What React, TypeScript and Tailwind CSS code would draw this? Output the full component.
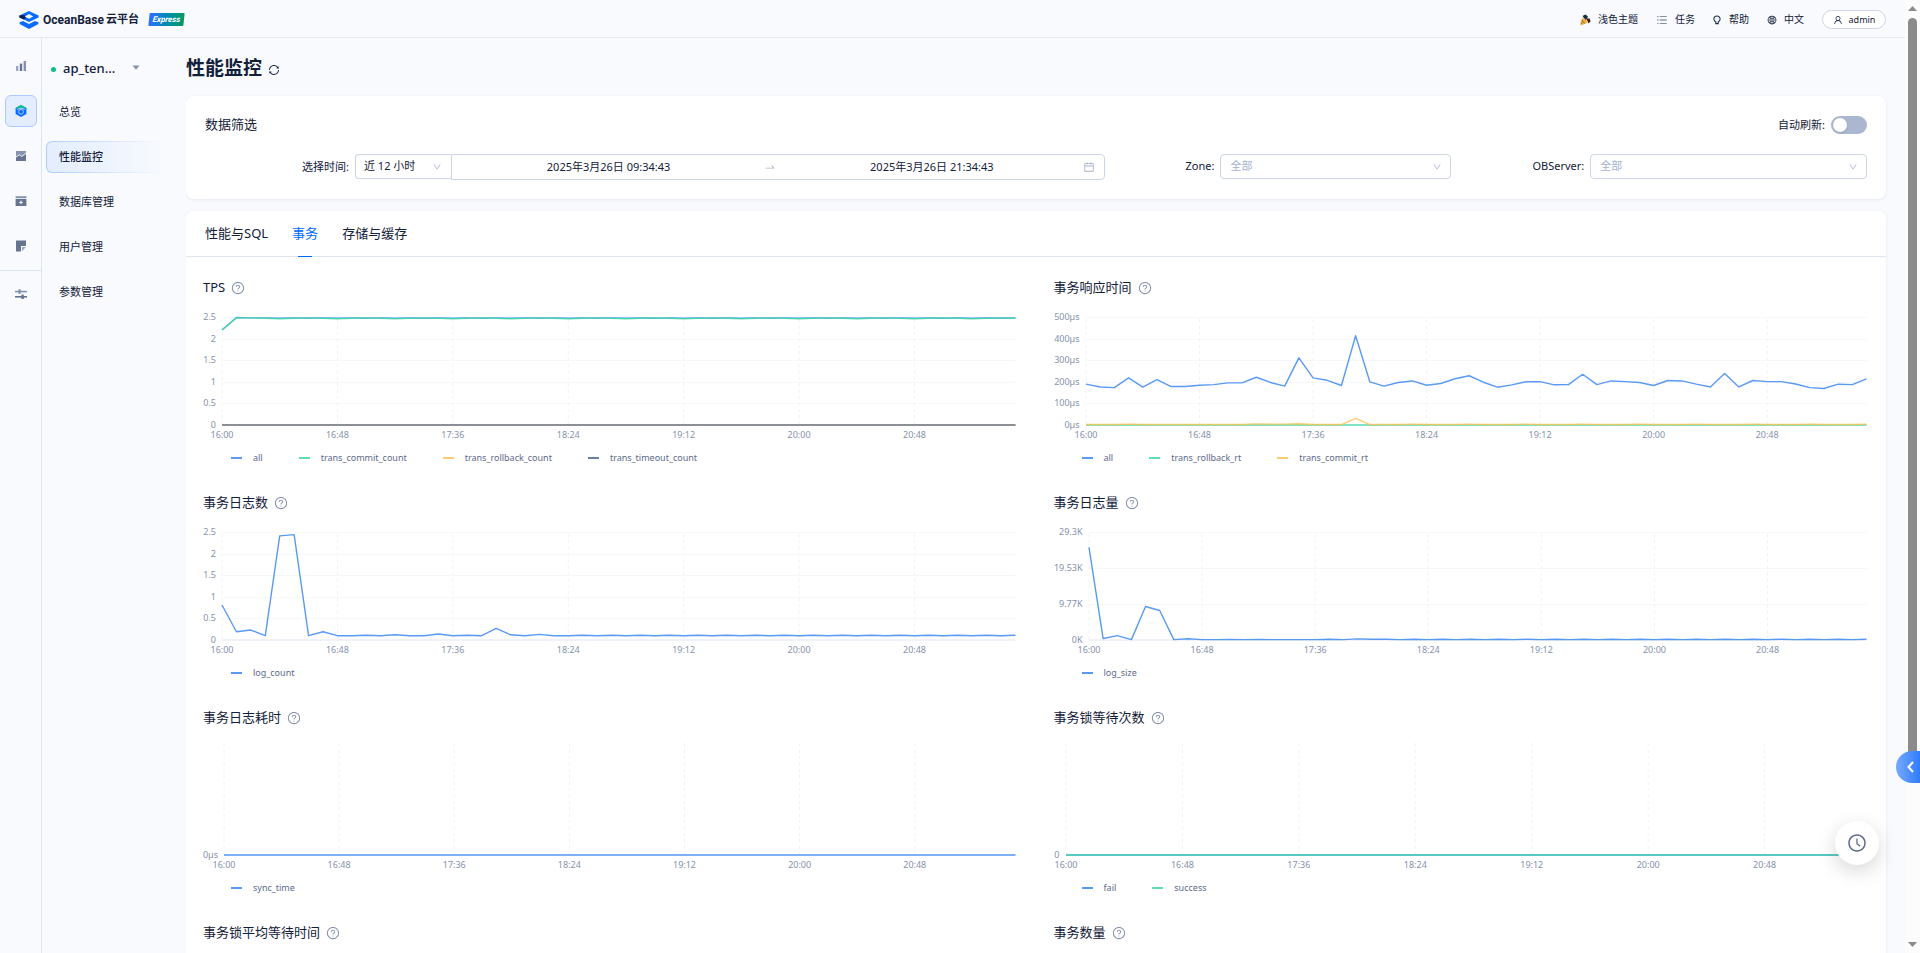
import type { ReactNode } from "react";
import {
  AiOutlineCalendar,
  AiOutlineClockCircle,
  AiOutlineDown,
  AiOutlineGlobal,
  AiOutlineQuestionCircle,
  AiOutlineSwapRight,
  AiOutlineSync,
  AiOutlineUnorderedList,
  AiOutlineUser,
} from "react-icons/ai";

type Series = {
  name: string;
  color: string;
  data: number[];
};

type ChartConfig = {
  title: string;
  axisWidth: string;
  ticks: string[];
  max: number;
  series: Series[];
};

const BLUE = "#3d88f2";
const GREEN = "#41d9a6";
const YELLOW = "#fac357";
const NAVY = "#4f6999";

const POINTS = 56;
const PLOT_HEIGHT = 108;
const TIMES = ["16:00", "16:48", "17:36", "18:24", "19:12", "20:00", "20:48"];

const fill = (head: number[], tail: number[]) =>
  Array.from({ length: POINTS }, (_, i) =>
    i < head.length ? head[i] : tail[i % tail.length],
  );

const zeros = fill([], [0]);

const charts: ChartConfig[] = [
  {
    title: "TPS",
    axisWidth: "w-[19px]",
    ticks: ["2.5", "2", "1.5", "1", "0.5", "0"],
    max: 2.5,
    series: [
      { name: "all", color: BLUE, data: fill([2.2, 2.49, 2.48], [2.47, 2.48]) },
      {
        name: "trans_commit_count",
        color: GREEN,
        data: fill([2.2, 2.48, 2.48], [2.46, 2.47, 2.48, 2.47]),
      },
      { name: "trans_rollback_count", color: YELLOW, data: zeros },
      { name: "trans_timeout_count", color: NAVY, data: zeros },
    ],
  },
  {
    title: "事务响应时间",
    axisWidth: "w-8",
    ticks: ["500µs", "400µs", "300µs", "200µs", "100µs", "0µs"],
    max: 500,
    series: [
      {
        name: "all",
        color: BLUE,
        data: [
          189, 176, 173, 218, 175, 210, 178, 178, 184, 187, 195, 195, 221, 197,
          180, 311, 218, 207, 183, 413, 200, 180, 197, 204, 184, 192, 214, 228,
          198, 175, 186, 200, 201, 186, 187, 235, 187, 204, 201, 197, 183, 206,
          204, 189, 176, 238, 176, 206, 201, 201, 190, 173, 169, 189, 187, 214,
        ],
      },
      { name: "trans_rollback_rt", color: GREEN, data: zeros },
      {
        name: "trans_commit_rt",
        color: YELLOW,
        data: fill(
          [2, 2, 2, 4, 2, 2, 2, 2, 2, 2, 2, 2, 5, 4, 4, 6, 2, 2, 2, 31, 2],
          [2, 2, 2, 4],
        ),
      },
    ],
  },
  {
    title: "事务日志数",
    axisWidth: "w-[19px]",
    ticks: ["2.5", "2", "1.5", "1", "0.5", "0"],
    max: 2.5,
    series: [
      {
        name: "log_count",
        color: BLUE,
        data: fill(
          [
            0.81, 0.19, 0.23, 0.1, 2.41, 2.44, 0.1, 0.19, 0.1, 0.1, 0.11, 0.1,
            0.12, 0.1, 0.1, 0.14, 0.1, 0.11, 0.1, 0.27, 0.12, 0.1, 0.13, 0.1,
          ],
          [0.1, 0.11],
        ),
      },
    ],
  },
  {
    title: "事务日志量",
    axisWidth: "w-[35px]",
    ticks: ["29.3K", "19.53K", "9.77K", "0K"],
    max: 29.3,
    series: [
      {
        name: "log_size",
        color: BLUE,
        data: fill(
          [
            25.1, 0.4, 1.2, 0.1, 9.1, 8, 0.1, 0.35, 0.1, 0.1, 0.15, 0.1, 0.15,
            0.1, 0.1, 0.1, 0.1, 0.2, 0.1, 0.3, 0.2,
          ],
          [0.1, 0.2],
        ),
      },
    ],
  },
  {
    title: "事务日志耗时",
    axisWidth: "w-[21px]",
    ticks: ["0µs"],
    max: 1,
    series: [{ name: "sync_time", color: BLUE, data: zeros }],
  },
  {
    title: "事务锁等待次数",
    axisWidth: "w-3",
    ticks: ["0"],
    max: 1,
    series: [
      { name: "fail", color: BLUE, data: zeros },
      { name: "success", color: GREEN, data: zeros },
    ],
  },
  {
    title: "事务锁平均等待时间",
    axisWidth: "w-[21px]",
    ticks: [],
    max: 1,
    series: [],
  },
  {
    title: "事务数量",
    axisWidth: "w-3",
    ticks: [],
    max: 1,
    series: [],
  },
];

function Plot({ ticks, max, series }: ChartConfig) {
  const single = ticks.length === 1;
  return (
    <svg className="mt-[7px] h-[130px] min-w-0 flex-1 overflow-visible">
      {!single &&
        ticks.map((tick, i) => {
          const y = Math.round((i * PLOT_HEIGHT) / (ticks.length - 1)) + 0.5;
          return (
            <line key={tick} x1="0" x2="100%" y1={y} y2={y} stroke="#f5f7fb" />
          );
        })}
      <line
        x1="0"
        x2="100%"
        y1={PLOT_HEIGHT}
        y2={PLOT_HEIGHT}
        stroke="#f0f2f8"
        strokeWidth="2"
      />
      {TIMES.map((time, i) => {
        const x = `${(i * 800) / (POINTS - 1)}%`;
        return (
          <g key={time}>
            <line
              x1={x}
              x2={x}
              y1={single ? -4 : 2}
              y2={PLOT_HEIGHT + 3}
              stroke="#f1f2f6"
              strokeDasharray="3.2 3.2"
            />
            <text x={x} y="121" textAnchor="middle" fontSize="9" fill="#8592ad">
              {time}
            </text>
          </g>
        );
      })}
      <svg
        width="100%"
        height={PLOT_HEIGHT}
        viewBox={`0 0 ${POINTS - 1} ${PLOT_HEIGHT}`}
        preserveAspectRatio="none"
        overflow="visible"
      >
        {series.map((s) => (
          <polyline
            key={s.name}
            points={s.data
              .map((v, i) => `${i},${PLOT_HEIGHT - (v / max) * PLOT_HEIGHT}`)
              .join(" ")}
            fill="none"
            stroke={s.color}
            strokeWidth="1.4"
            strokeOpacity="0.85"
            strokeLinejoin="round"
            vectorEffect="non-scaling-stroke"
          />
        ))}
      </svg>
    </svg>
  );
}

function Chart(props: ChartConfig) {
  const { title, axisWidth, ticks, series } = props;
  return (
    <section>
      <h3 className="flex h-5 items-center gap-1.5 text-[13px]">
        {title}
        <AiOutlineQuestionCircle className="size-3.5 text-[#8592ad]" />
      </h3>
      {series.length > 0 && (
        <>
          <div className="mt-3 flex h-[137px]">
            <div
              className={`flex h-[122px] flex-col items-end pr-1.5 text-[9px] leading-[14px] whitespace-nowrap text-[#8592ad] ${
                ticks.length > 1 ? "justify-between" : "justify-end"
              } ${axisWidth}`}
            >
              {ticks.map((tick) => (
                <span key={tick}>{tick}</span>
              ))}
            </div>
            <Plot {...props} />
          </div>
          <ul className="flex h-[22px] items-center gap-9 pl-7 text-[9px] text-[#5c6b8a]">
            {series.map((s) => (
              <li key={s.name} className="flex items-center gap-[11px]">
                <svg className="h-0.5 w-[11px]">
                  <rect width="11" height="2" fill={s.color} opacity="0.85" />
                </svg>
                {s.name}
              </li>
            ))}
          </ul>
        </>
      )}
    </section>
  );
}

function Logo() {
  return (
    <svg viewBox="0 0 20 18" className="h-[18px] w-5">
      <path d="M10 0l9.6 4.6v1.8L10 11 .4 6.4V4.6z" fill="#0a6cff" />
      <path d="M.4 4.6L5.4 4l1.4 2.6-2 1.8L.4 6.4z" fill="#0b1f4a" />
      <path d="M10 3l4.2 2.4L10 7.8 5.8 5.4z" fill="#f8fafe" />
      <path
        d="M.6 11.2l3.4-1.1 6 2.9 6-2.9 3.4 1.1v1.7L10 18 .6 12.9z"
        fill="#0a6cff"
      />
    </svg>
  );
}

function Header() {
  return (
    <header className="flex h-[38px] shrink-0 items-center border-b border-[#e2e8f3] px-[19px] pt-0.5">
      <Logo />
      <div className="ml-1 flex items-center gap-0.5 font-bold">
        <span className="font-['Roboto','Noto_Sans_CJK_SC',sans-serif] text-xs">
          OceanBase
        </span>
        <span className="text-[11px]">云平台</span>
      </div>
      <span className="ml-2.5 flex h-[13px] w-[35px] -skew-x-6 items-center justify-center rounded-[1px] bg-linear-to-r from-[#2f6bff] to-[#0b9a5c] font-['Roboto',sans-serif] text-[8px] font-bold text-white italic">
        Express
      </span>
      <nav className="ml-auto flex items-center gap-[18px] text-[10px]">
        <button className="flex items-center gap-[7px]">
          <svg viewBox="0 0 12 12" className="size-3">
            <path d="M3.4 3.2l5.6 5.4L1 11.4z" fill="#f5b83d" />
            <path d="M2.6 6l3.2 3.6M1.9 8.4l1.8 2" stroke="#8a5a1a" />
            <path d="M3.6 2L6.4.4l2.4 1.8-.4 2.6-2.4.8z" fill="#12313c" />
            <path d="M7.4 5l3-.8 1.2 3-1.9 2.4z" fill="#3a1c1c" />
            <circle cx="6.8" cy="5.8" r="1" fill="#e8642f" />
          </svg>
          浅色主题
        </button>
        <button className="flex items-center gap-[7px]">
          <AiOutlineUnorderedList className="size-3 text-[#5c6b8a]" />
          任务
        </button>
        <button className="flex items-center gap-2">
          <svg viewBox="0 0 8 10" className="h-2.5 w-2" fill="none">
            <path
              d="M2.8 7C1.6 6.4.9 5.4.9 4.1a3.1 3.1 0 016.2 0c0 1.3-.7 2.3-1.9 2.9v1.6H2.8z"
              stroke="#1f2d4d"
              strokeWidth="1.1"
            />
          </svg>
          帮助
        </button>
        <button className="flex items-center gap-[7px]">
          <AiOutlineGlobal className="size-2.5" />
          中文
        </button>
        <button className="flex h-[19px] w-16 items-center justify-center gap-1.5 rounded-full border border-[#cdd5e6] bg-white text-[9px]">
          <AiOutlineUser className="size-2.5" />
          admin
        </button>
      </nav>
    </header>
  );
}

function RailItem({
  label,
  active,
  children,
}: {
  label: string;
  active?: boolean;
  children: ReactNode;
}) {
  return (
    <a
      href="#"
      aria-label={label}
      className={`flex size-8 items-center justify-center rounded-md border ${
        active ? "border-[#aecbff] bg-[#e3edfe]" : "border-transparent"
      }`}
    >
      <svg viewBox="0 0 12 12" className="size-3">
        {children}
      </svg>
    </a>
  );
}

function Rail() {
  return (
    <nav className="flex w-[42px] shrink-0 flex-col border-r border-[#dbe4f2] pt-3">
      <div className="flex flex-col items-center gap-[13px]">
        <RailItem label="监控">
          <path d="M1 6h2.4v5H1z" fill="#9aa6bf" />
          <path d="M4.8 3.6h2.4V11H4.8z" fill="#66748f" />
          <path d="M8.6 1H11v10H8.6z" fill="#8793ad" />
        </RailItem>
        <RailItem label="租户" active>
          <path d="M6 0l5.4 3v6L6 12 .6 9V3z" fill="#0a6cff" />
          <path d="M6 0l5.4 3v1L6 2.6.6 4V3z" fill="#0ac185" />
          <path
            d="M2.2 4.4L6 3.2l3.8 1.2"
            stroke="#e3edfe"
            fill="none"
            strokeWidth=".8"
          />
          <circle
            cx="6"
            cy="6.8"
            r="2.4"
            fill="#0a6cff"
            stroke="#cfe0ff"
            strokeWidth=".8"
          />
        </RailItem>
        <RailItem label="巡检">
          <path d="M1 1h10v10H1z" fill="#66748f" />
          <path d="M1 1h10v3.6L6.8 7.2 4.6 5.6 1 7.6z" fill="#8793ad" />
          <path
            d="M1 7l3.4-2.4 2.4 1.8L11 3"
            stroke="#f8fafe"
            fill="none"
            strokeWidth=".9"
          />
        </RailItem>
        <RailItem label="备份">
          <path d="M.6 1.2h10.8v2H.6z" fill="#8793ad" />
          <path d="M.6 4h10.8v7H.6z" fill="#66748f" />
          <path d="M6 5.6v3.6M4.2 7.4h3.6" stroke="#f8fafe" />
        </RailItem>
        <RailItem label="诊断">
          <path d="M1 .6h10V6H6v5.6H1z" fill="#66748f" />
          <path d="M7 7h4l-4 4.2z" fill="#9aa6bf" />
        </RailItem>
      </div>
      <hr className="mt-2 mb-[7px] border-[#dbe4f2]" />
      <div className="flex justify-center">
        <RailItem label="系统设置">
          <path d="M0 3.6h12" stroke="#8793ad" strokeWidth="1.6" />
          <path d="M3.4 1.4h2.4v4.4H3.4z" fill="#8793ad" />
          <path d="M0 8.8h12" stroke="#66748f" strokeWidth="1.6" />
          <path d="M6.4 6.6h2.4V11H6.4z" fill="#66748f" />
        </RailItem>
      </div>
    </nav>
  );
}

const menu = ["总览", "性能监控", "数据库管理", "用户管理", "参数管理"];

function Sidebar() {
  return (
    <aside className="w-36 shrink-0 pt-[15px] pl-1">
      <button className="flex h-8 items-center pl-[5px] text-[13px] font-medium">
        <span className="size-[5px] rounded-full bg-[#0ac185]" />
        <span className="ml-[7px] w-[63px] text-left">ap_ten...</span>
        <svg viewBox="0 0 8 5" className="mb-1 ml-1.5 h-[5px] w-2">
          <path d="M.5.5h7L4 4.8z" fill="#8592ad" />
        </svg>
      </button>
      <nav className="mt-[11px] flex flex-col gap-[13px] text-[11px]">
        {menu.map((item) =>
          item === "性能监控" ? (
            <a
              key={item}
              href="#"
              className="flex h-8 w-[119px] rounded-l-md bg-linear-to-r from-[#aecbff] to-[#f8fafe] p-px font-medium"
            >
              <span className="flex flex-1 items-center rounded-l-[5px] bg-linear-to-r from-[#e3edfe] to-[#f8fafe] pl-3">
                {item}
              </span>
            </a>
          ) : (
            <a key={item} href="#" className="flex h-8 items-center pl-[13px]">
              {item}
            </a>
          ),
        )}
      </nav>
    </aside>
  );
}

function FilterSelect({
  id,
  label,
  labelWidth,
}: {
  id: string;
  label: string;
  labelWidth: string;
}) {
  return (
    <div className="flex items-center">
      <label htmlFor={id} className={`shrink-0 pr-1.5 text-right ${labelWidth}`}>
        {label}:
      </label>
      <div className="relative flex-1">
        <select
          id={id}
          className="h-[25px] w-full appearance-none rounded border border-[#cdd5e6] bg-white px-[9px] text-[#a3b3cf]"
        >
          <option>全部</option>
        </select>
        <AiOutlineDown className="pointer-events-none absolute top-2 right-[9px] size-2.5 text-[#a9b3cb]" />
      </div>
    </div>
  );
}

function Filters() {
  return (
    <section className="rounded-lg bg-white px-[19px] py-[19px] shadow-[0_1px_3px_rgba(54,69,99,0.10)]">
      <div className="flex h-5 items-center justify-between">
        <h2 className="text-[13px]">数据筛选</h2>
        <div className="flex items-center gap-1.5 text-[11px]">
          <label htmlFor="auto-refresh">自动刷新:</label>
          <input
            id="auto-refresh"
            type="checkbox"
            role="switch"
            className="h-[18px] w-9 appearance-none rounded-full bg-[#abb6d0] before:m-0.5 before:block before:size-3.5 before:rounded-full before:bg-white before:shadow"
          />
        </div>
      </div>
      <form className="mt-[19px] grid grid-cols-[901fr_327fr_397fr] items-start gap-[19px] text-[11px]">
        <div className="flex items-start">
          <label
            htmlFor="range"
            className="w-[150px] shrink-0 pr-1.5 text-right leading-[25px]"
          >
            选择时间:
          </label>
          <div className="relative w-24 shrink-0">
            <select
              id="range"
              className="h-[25px] w-full appearance-none rounded-l border border-r-0 border-[#cdd5e6] bg-white px-2"
            >
              <option>近 12 小时</option>
            </select>
            <AiOutlineDown className="pointer-events-none absolute top-2 right-[9px] size-2.5 text-[#a9b3cb]" />
          </div>
          <div className="flex h-[26px] flex-1 items-center rounded-r border border-[#cdd5e6] px-[9px]">
            <input
              aria-label="开始时间"
              defaultValue="2025年3月26日 09:34:43"
              className="min-w-0 flex-1 text-center outline-none"
            />
            <AiOutlineSwapRight className="mx-2 size-3 text-[#a9b3cb]" />
            <input
              aria-label="结束时间"
              defaultValue="2025年3月26日 21:34:43"
              className="min-w-0 flex-1 text-center outline-none"
            />
            <AiOutlineCalendar className="ml-1 size-3 text-[#a9b3cb]" />
          </div>
        </div>
        <FilterSelect id="zone" label="Zone" labelWidth="w-24" />
        <FilterSelect id="observer" label="OBServer" labelWidth="w-[120px]" />
      </form>
    </section>
  );
}

const tabs = ["性能与SQL", "事务", "存储与缓存"];

function Charts() {
  return (
    <section className="mt-3 rounded-lg bg-white shadow-[0_1px_3px_rgba(54,69,99,0.10)]">
      <div
        role="tablist"
        className="flex h-[46px] gap-6 border-b border-[#dfe6f1] px-[19px] text-[13px]"
      >
        {tabs.map((tab) => (
          <button
            key={tab}
            role="tab"
            aria-selected={tab === "事务"}
            className="relative aria-selected:text-[#006aff] aria-selected:after:absolute aria-selected:after:-bottom-px aria-selected:after:left-1.5 aria-selected:after:h-px aria-selected:after:w-3.5 aria-selected:after:bg-[#006aff]"
          >
            {tab}
          </button>
        ))}
      </div>
      <div className="grid grid-cols-2 gap-x-[38px] gap-y-6 pt-[21px] pr-5 pb-6 pl-[17px]">
        {charts.map((chart) => (
          <Chart key={chart.title} {...chart} />
        ))}
      </div>
    </section>
  );
}

function Scrollbar() {
  return (
    <div
      aria-hidden
      className="flex w-[15px] shrink-0 flex-col items-center bg-[#fcfcfc] py-1.5"
    >
      <svg viewBox="0 0 9 5" className="h-[5px] w-[9px]">
        <path d="M4.5 0L9 5H0z" fill="#8b8b8b" />
      </svg>
      <div className="mt-[7px] h-[79%] w-[9px] rounded-full bg-[#8b8b8b]" />
      <svg viewBox="0 0 9 5" className="mt-auto h-[5px] w-[9px]">
        <path d="M0 0h9L4.5 5z" fill="#8b8b8b" />
      </svg>
    </div>
  );
}

export default function App() {
  return (
    <div className="flex h-screen overflow-hidden bg-[#f8fafe] font-['Noto_Sans','Noto_Sans_CJK_SC',sans-serif] text-[#132039]">
      <div className="flex min-w-0 flex-1 flex-col">
        <Header />
        <div className="flex min-h-0 flex-1">
          <Rail />
          <Sidebar />
          <main className="min-w-0 flex-1 overflow-hidden pr-[19px]">
            <div className="flex h-[58px] items-center gap-1.5 pt-0.5">
              <h1 className="text-[19px] font-bold">性能监控</h1>
              <button aria-label="刷新" className="mt-1">
                <AiOutlineSync className="size-3" />
              </button>
            </div>
            <Filters />
            <Charts />
          </main>
        </div>
      </div>
      <Scrollbar />

      <button
        aria-label="展开侧栏"
        className="fixed right-0 bottom-[170px] flex h-8 w-6 items-center justify-center rounded-l-full bg-linear-to-r from-[#75a9ff] to-[#2f7bff] pl-1"
      >
        <svg viewBox="0 0 7 12" className="h-3 w-[7px]">
          <path
            d="M6 1L1.5 6 6 11"
            stroke="white"
            strokeWidth="2"
            fill="none"
          />
        </svg>
      </button>
      <button
        aria-label="历史记录"
        className="fixed right-[41px] bottom-[88px] flex size-11 items-center justify-center rounded-full bg-white shadow-[0_6px_20px_rgba(0,0,0,0.16)]"
      >
        <AiOutlineClockCircle className="size-5 text-[#5c6b8a]" />
      </button>
    </div>
  );
}
